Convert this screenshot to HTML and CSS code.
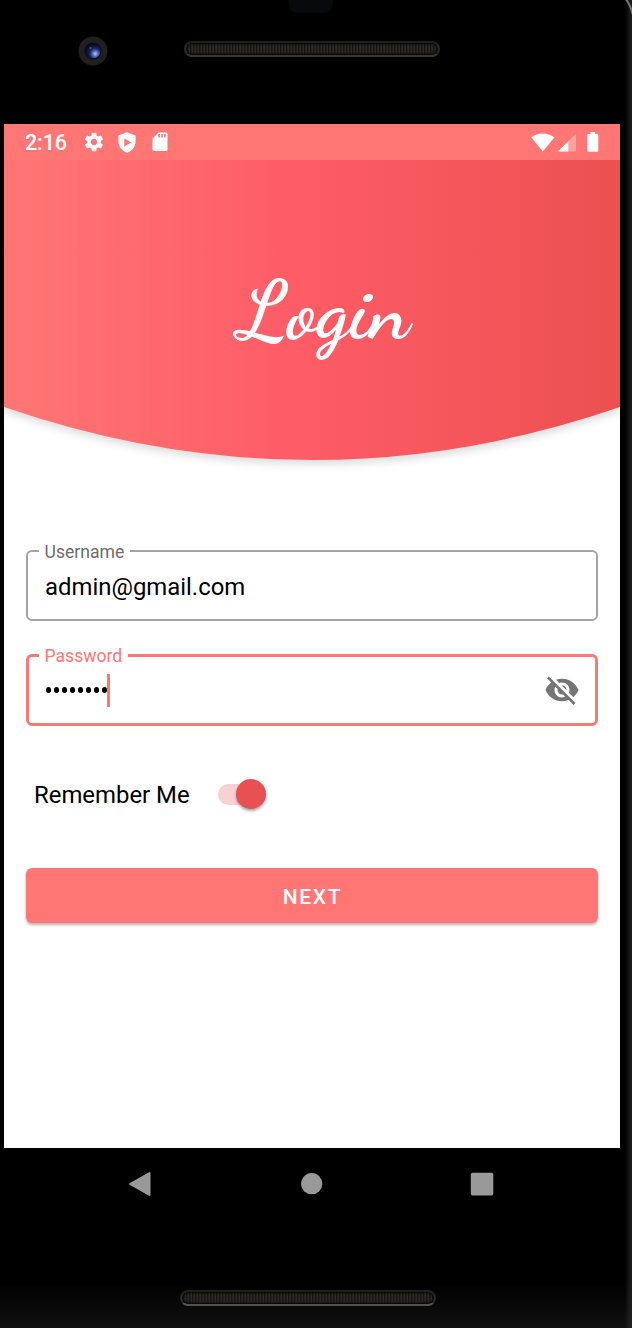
FILE: index.html
```html
<!DOCTYPE html>
<html lang="en">
<head>
<meta charset="utf-8">
<title>Login</title>
<link rel="stylesheet" href="styles.css">
</head>
<body>
<div class="phone">
  <svg class="corner" viewBox="0 0 10 16"><path d="M2 -3Q8 3 10.500 14" fill="none" stroke="#77777a" stroke-width="2"/></svg>
  <div class="bezel-top">
    <div class="sensor"></div>
    <svg class="camera" viewBox="0 0 30 30">
      <defs>
        <radialGradient id="lens" cx="65%" cy="68%" r="65%">
          <stop offset="0" stop-color="#b9cbff"/><stop offset=".25" stop-color="#5a76d3"/><stop offset=".55" stop-color="#18235c"/><stop offset="1" stop-color="#070a1b"/>
        </radialGradient>
      </defs>
      <circle cx="15" cy="15" r="14.500" fill="#211f20"/>
      <circle cx="15" cy="15" r="8.600" fill="#080a14"/>
      <circle cx="15" cy="15" r="7.600" fill="url(#lens)"/>
      <circle cx="12.500" cy="12" r="1" fill="#4a66c4"/>
    </svg>
    <div class="speaker"></div>
  </div>

  <main class="screen">
    <div class="status-bar">
      <span class="clock">2:16</span>
      <svg class="icon gear" viewBox="0 0 24 24"><path fill="#fff" d="M19.43 12.98c.04-.32.07-.64.07-.98s-.03-.66-.07-.98l2.11-1.65c.19-.15.24-.42.12-.64l-2-3.46c-.12-.22-.39-.3-.61-.22l-2.49 1c-.52-.4-1.080-.73-1.690-.98l-.38-2.65C14.46 2.180 14.250 2 14 2h-4c-.25 0-.46.18-.49.42l-.38 2.65c-.61.25-1.170.59-1.690.98l-2.490-1c-.23-.09-.49 0-.61.22l-2 3.460c-.13.22-.07.49.12.64l2.110 1.650c-.04.32-.07.65-.07.98s.03.66.07.98l-2.110 1.650c-.19.15-.24.42-.12.64l2 3.460c.12.22.39.3.61.22l2.490-1c.52.4 1.080.73 1.690.98l.38 2.650c.03.24.24.42.49.42h4c.25 0 .46-.18.49-.42l.38-2.650c.61-.25 1.170-.59 1.690-.98l2.490 1c.23.09.49 0 .61-.22l2-3.460c.12-.22.07-.49-.12-.64l-2.110-1.650zM12 15.500c-1.930 0-3.500-1.570-3.500-3.500s1.570-3.500 3.500-3.500 3.500 1.570 3.500 3.500-1.570 3.500-3.500 3.500z"/></svg>
      <svg class="icon shield" viewBox="0 0 18 21"><path fill="#fff" fill-rule="evenodd" d="M9 .3 17.600 3.500V9C17.600 15 14 19 9 20.700 4 19 .4 15 .4 9V3.500ZM6.300 6.500v8L13.300 10.500Z"/></svg>
      <svg class="icon card" viewBox="0 0 16 20"><path fill="#fff" fill-rule="evenodd" d="M6.500.5H14Q15.500.5 15.500 2V17.500Q15.500 19 14 19H2Q.5 19 .5 17.500V6.500ZM6.300 2V5.500H8V2ZM9.100 2V5.500H10.800V2ZM11.900 2V5.500H13.600V2Z"/></svg>
      <span class="spacer"></span>
      <svg class="icon wifi" viewBox="0 0 24 19"><path fill="#fff" d="M.3 4.500Q5 .4 11.800.4T23.300 4.500L11.800 18.600Z"/></svg>
      <svg class="icon signal" viewBox="0 0 18 19"><path fill="#fff" fill-opacity=".33" d="M18 .5V17.500Q18 18.500 17 18.500H0Z"/><path fill="#fff" d="M10.300 8.200V18.500H0Z"/></svg>
      <svg class="icon battery" viewBox="0 0 12 20"><path fill="#fff" d="M3.500 0h4.700v2H10Q11.300 2 11.300 3V18.500Q11.300 19.700 10 19.700H1.500Q.3 19.700.3 18.500V3Q.3 2 1.500 2h2Z"/></svg>
    </div>

    <header class="hero">
      <svg class="hero-shape" viewBox="0 0 616 320">
        <defs>
          <linearGradient id="coral"><stop offset="0" stop-color="#ff7675"/><stop offset=".47" stop-color="#fe5c66"/><stop offset="1" stop-color="#ec5051"/></linearGradient>
        </defs>
        <path fill="url(#coral)" d="M0 0H616V247Q462 300 308 300T0 247Z"/>
      </svg>
      <h1 class="title">Login</h1>
    </header>

    <form class="form">
      <fieldset class="field">
        <legend>Username</legend>
        <span class="value">admin@gmail.com</span>
      </fieldset>
      <fieldset class="field focused">
        <legend>Password</legend>
        <span class="dots"><i></i><i></i><i></i><i></i><i></i><i></i><i></i><i></i></span><span class="caret"></span>
        <svg class="eye" viewBox="0 0 24 24"><path fill="#757575" d="M12 7c2.760 0 5 2.240 5 5 0 .65-.13 1.260-.36 1.830l2.920 2.920c1.510-1.260 2.700-2.890 3.430-4.750-1.730-4.390-6-7.500-11-7.500-1.400 0-2.740.25-3.980.7l2.160 2.160C10.740 7.130 11.350 7 12 7zM2 4.270l2.280 2.280.46.46C3.080 8.300 1.780 10.020 1 12c1.730 4.390 6 7.500 11 7.500 1.550 0 3.030-.3 4.380-.84l.42.42L19.730 22 21 20.730 3.270 3 2 4.270zM7.530 9.800l1.550 1.550c-.05.21-.08.43-.08.65 0 1.660 1.340 3 3 3 .22 0 .44-.03.65-.08l1.550 1.550c-.67.33-1.410.53-2.200.53-2.760 0-5-2.240-5-5 0-.79.2-1.530.53-2.200zm4.310-.78 3.150 3.150.02-.16c0-1.660-1.340-3-3-3l-.17.01z"/></svg>
      </fieldset>
      <div class="remember">
        <span class="remember-label">Remember Me</span>
        <span class="switch"><span class="thumb"></span></span>
      </div>
      <button class="next" type="button">NEXT</button>
    </form>
  </main>

  <div class="bezel-bottom">
    <nav class="nav">
      <svg class="nav-icon" viewBox="0 0 24 26"><path fill="#999" stroke="#999" stroke-width="2" stroke-linejoin="round" d="M2 13 21.500 2V24Z"/></svg>
      <svg class="nav-icon" viewBox="0 0 24 26"><circle cx="12.700" cy="12.700" r="10.600" fill="#999"/></svg>
      <svg class="nav-icon" viewBox="0 0 24 26"><rect x=".8" y="1.700" width="22.500" height="22.800" rx="1.800" fill="#999"/></svg>
    </nav>
    <div class="speaker"></div>
  </div>
</div>
</body>
</html>
```
FILE: styles.css
```css
* { box-sizing: border-box; }
body { margin: 0; background: #000; font-family: Roboto, "Liberation Sans", sans-serif; }
.phone {
  position: relative;
  display: flex;
  flex-direction: column;
  width: 632px;
  height: 1328px;
  overflow: hidden;
  background: linear-gradient(90deg, #000 625px, #151515 629px, #1b1b1b 632px);
}
.corner { position: absolute; top: 0; right: 0; width: 10px; height: 16px; }
.bezel-top { display: flex; position: relative; height: 124px; padding: 36px 0 0 78px; align-items: flex-start; }
.sensor { position: absolute; left: 289px; top: -8px; width: 44px; height: 21px; border-radius: 9px; background: #08090d; }
.camera { width: 30px; height: 30px; }
.speaker {
  width: 256px;
  height: 16px;
  margin: 5px 0 0 76px;
  border: 2px solid #292929;
  border-top-color: #202020;
  border-bottom-color: #383735;
  border-radius: 8px;
  background: repeating-linear-gradient(90deg, #2c2923 0 1px, #171613 1px 2px, #23211c 2px 3px);
  box-shadow: inset 0 0 2px 1px #000;
}
.screen { display: flex; flex-direction: column; width: 616px; height: 1024px; margin-left: 4px; background: #fff; }
.status-bar { display: flex; position: relative; z-index: 1; align-items: center; height: 36px; padding: 0 21px; background: #ff7675; color: #fff; }
.clock { width: 59px; font-size: 21.500px; font-weight: 500; line-height: 36px; padding-top: 2px; letter-spacing: -.1px; }
.icon { display: block; flex: none; }
.gear { width: 22px; height: 22px; margin-left: -1.500px; }
.shield { width: 18px; height: 21px; margin-left: 13px; }
.card { width: 16px; height: 20px; margin-left: 16px; }
.spacer { flex: 1; }
.wifi { width: 24px; height: 19px; }
.signal { width: 18px; height: 19px; margin: 1px 11px 0 3px; }
.battery { width: 12px; height: 20px; }
.hero { display: grid; height: 320px; }
.hero > * { grid-area: 1 / 1; }
.hero-shape { width: 616px; height: 320px; filter: drop-shadow(0 4px 4px rgba(0, 0, 0, .14)); }
.title {
  z-index: 1;
  margin: 106px 0 0 24px;
  color: #fff;
  font: 700 82px/90px "Dancing Script", "Liberation Serif", cursive;
  text-align: center;
}
.form { display: flex; flex-direction: column; padding: 61px 22px 0; }
.field {
  display: flex;
  align-items: center;
  height: 80px;
  margin: 0 0 24px;
  padding: 11px 17px 0 17px;
  border: 2px solid #a3a3a3;
  border-radius: 6px;
  color: #000;
}
.field legend { height: 20px; margin-left: -6.500px; padding: 0 6px; color: #6d6d6d; font-size: 17.600px; line-height: 22px; }
.field.focused { height: 81px; margin-bottom: 23px; border: 3px solid #ff7675; padding: 7px 15px 0 16px; }
.field.focused legend { margin-left: -6.500px; color: #ff7675; }
.value { font-size: 23.900px; line-height: 30px; }
.dots { display: flex; gap: 2.800px; margin-left: .5px; }
.dots i { width: 5.300px; height: 5.600px; border-radius: 50%; background: #000; }
.caret { width: 3px; height: 33px; background: #ff7675; }
.eye { width: 36px; height: 36px; margin-left: auto; }
.remember { display: flex; align-items: center; height: 34px; margin: 28px 0 1px 8px; }
.remember-label { width: 184px; padding-top: 1px; font-size: 23.900px; line-height: 34px; white-space: nowrap; }
.switch { display: flex; justify-content: flex-end; align-items: center; width: 48px; height: 21px; border-radius: 11px; background: #fad1d3; }
.thumb { width: 30px; height: 30px; flex: none; border-radius: 50%; background: #e95053; box-shadow: 0 2px 3px rgba(0, 0, 0, .35); }
.next {
  height: 55px;
  margin-top: 56px;
  border: 0;
  border-radius: 6px;
  background: #ff7675;
  color: #fff;
  font: 500 21px/54px Roboto, sans-serif;
  letter-spacing: 1.700px;
  padding: 2px 0 0 1px;
  box-shadow: 0 2px 3px rgba(0, 0, 0, .3);
}
.bezel-bottom { height: 180px; background: linear-gradient(transparent 75%, rgba(45, 45, 45, .38)); }
.nav { display: flex; justify-content: space-between; padding: 23px 138px 0 128px; }
.nav-icon { width: 24px; height: 26px; }
.bezel-bottom .speaker { margin: 93px 0 0 180px; border-bottom-color: #55534f; }
```
